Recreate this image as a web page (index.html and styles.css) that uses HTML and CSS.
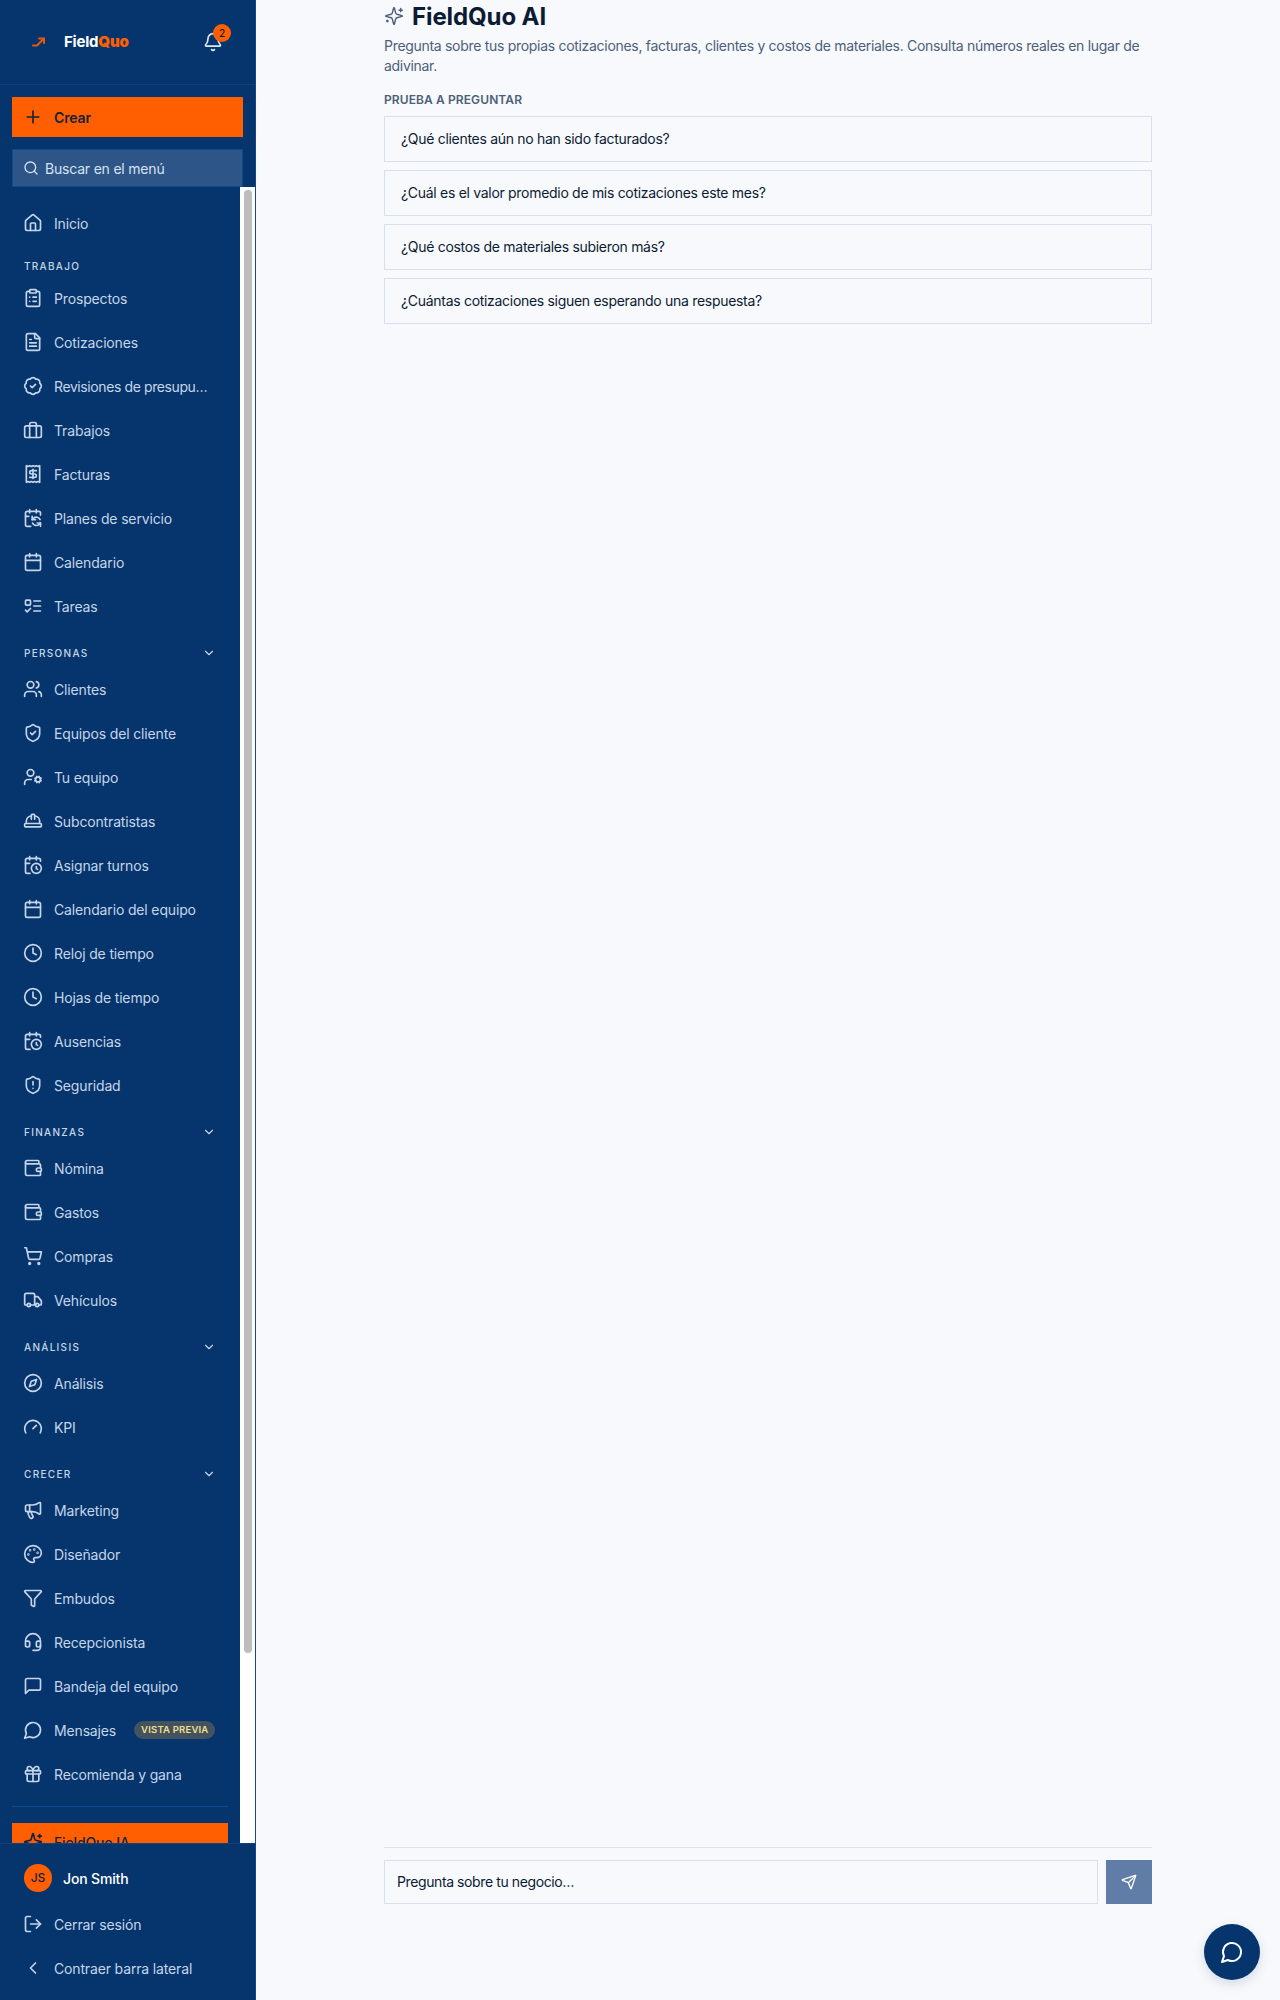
FILE: index.html
```html
<!DOCTYPE html>
<html lang="es">
<head>
	<meta charset="UTF-8">
	<title>FieldQuo AI</title>
	<link rel="stylesheet" href="styles.css">
</head>
<body>
	<svg class="sprite" xmlns="http://www.w3.org/2000/svg">
		<symbol id="i-house" viewBox="0 0 24 24"><path d="M15 21v-8a1 1 0 0 0-1-1h-4a1 1 0 0 0-1 1v8"/><path d="M3 10a2 2 0 0 1 .709-1.528l7-5.999a2 2 0 0 1 2.582 0l7 5.999A2 2 0 0 1 21 10v9a2 2 0 0 1-2 2H5a2 2 0 0 1-2-2z"/></symbol>
		<symbol id="i-clipboard" viewBox="0 0 24 24"><rect x="8" y="2" width="8" height="4" rx="1"/><path d="M16 4h2a2 2 0 0 1 2 2v14a2 2 0 0 1-2 2H6a2 2 0 0 1-2-2V6a2 2 0 0 1 2-2h2"/><path d="M12 11h4"/><path d="M12 16h4"/><path d="M8 11h.01"/><path d="M8 16h.01"/></symbol>
		<symbol id="i-file" viewBox="0 0 24 24"><path d="M15 2H6a2 2 0 0 0-2 2v16a2 2 0 0 0 2 2h12a2 2 0 0 0 2-2V7Z"/><path d="M14 2v4a2 2 0 0 0 2 2h4"/><path d="M10 9H8"/><path d="M16 13H8"/><path d="M16 17H8"/></symbol>
		<symbol id="i-badge" viewBox="0 0 24 24"><path d="M3.85 8.62a4 4 0 0 1 4.78-4.77 4 4 0 0 1 6.74 0 4 4 0 0 1 4.78 4.78 4 4 0 0 1 0 6.74 4 4 0 0 1-4.77 4.78 4 4 0 0 1-6.75 0 4 4 0 0 1-4.78-4.77 4 4 0 0 1 0-6.76Z"/><path d="m9 12 2 2 4-4"/></symbol>
		<symbol id="i-briefcase" viewBox="0 0 24 24"><rect x="2" y="7" width="20" height="14" rx="2"/><path d="M16 21V5a2 2 0 0 0-2-2h-4a2 2 0 0 0-2 2v16"/></symbol>
		<symbol id="i-receipt" viewBox="0 0 24 24"><path d="M4 2v20l2-1 2 1 2-1 2 1 2-1 2 1 2-1 2 1V2l-2 1-2-1-2 1-2-1-2 1-2-1-2 1Z"/><path d="M16 8h-6a2 2 0 1 0 0 4h4a2 2 0 1 1 0 4H8"/><path d="M12 17.5v-11"/></symbol>
		<symbol id="i-calsync" viewBox="0 0 24 24"><path d="M11 10v4h4"/><path d="m11 14 1.535-1.605a5 5 0 0 1 8 1.5"/><path d="M16 2v4"/><path d="m21 18-1.535 1.605a5 5 0 0 1-8-1.5"/><path d="M21 22v-4h-4"/><path d="M21 8.5V6a2 2 0 0 0-2-2H5a2 2 0 0 0-2 2v14a2 2 0 0 0 2 2h4.3"/><path d="M3 10h4"/><path d="M8 2v4"/></symbol>
		<symbol id="i-calendar" viewBox="0 0 24 24"><path d="M8 2v4"/><path d="M16 2v4"/><rect x="3" y="4" width="18" height="18" rx="2"/><path d="M3 10h18"/></symbol>
		<symbol id="i-todo" viewBox="0 0 24 24"><rect x="3" y="5" width="6" height="6" rx="1"/><path d="m3 17 2 2 4-4"/><path d="M13 6h8"/><path d="M13 12h8"/><path d="M13 18h8"/></symbol>
		<symbol id="i-users" viewBox="0 0 24 24"><path d="M16 21v-2a4 4 0 0 0-4-4H6a4 4 0 0 0-4 4v2"/><circle cx="9" cy="7" r="4"/><path d="M22 21v-2a4 4 0 0 0-3-3.87"/><path d="M16 3.13a4 4 0 0 1 0 7.75"/></symbol>
		<symbol id="i-shieldcheck" viewBox="0 0 24 24"><path d="M20 13c0 5-3.5 7.5-7.66 8.95a1 1 0 0 1-.67-.01C7.5 20.5 4 18 4 13V6a1 1 0 0 1 1-1c2 0 4.5-1.2 6.24-2.72a1.17 1.17 0 0 1 1.52 0C14.51 3.81 17 5 19 5a1 1 0 0 1 1 1z"/><path d="m9 12 2 2 4-4"/></symbol>
		<symbol id="i-usercog" viewBox="0 0 24 24"><circle cx="18" cy="15" r="3"/><circle cx="9" cy="7" r="4"/><path d="M10 15H6a4 4 0 0 0-4 4v2"/><path d="m21.7 16.4-.9-.3"/><path d="m15.2 13.9-.9-.3"/><path d="m16.6 18.7.3-.9"/><path d="m19.1 12.2.3-.9"/><path d="m19.6 18.7-.4-1"/><path d="m16.8 12.3-.4-1"/><path d="m14.3 16.6 1-.4"/><path d="m20.7 13.8 1-.4"/></symbol>
		<symbol id="i-hardhat" viewBox="0 0 24 24"><path d="M10 10V5a1 1 0 0 1 1-1h2a1 1 0 0 1 1 1v5"/><path d="M14 6a6 6 0 0 1 6 6v3"/><path d="M4 15v-3a6 6 0 0 1 6-6"/><rect x="2" y="15" width="20" height="4" rx="1"/></symbol>
		<symbol id="i-calclock" viewBox="0 0 24 24"><path d="M16 14v2.2l1.6 1"/><path d="M16 2v4"/><path d="M21 7.5V6a2 2 0 0 0-2-2H5a2 2 0 0 0-2 2v14a2 2 0 0 0 2 2h3.5"/><path d="M3 10h5"/><path d="M8 2v4"/><circle cx="16" cy="16" r="6"/></symbol>
		<symbol id="i-clock" viewBox="0 0 24 24"><circle cx="12" cy="12" r="10"/><polyline points="12 6 12 12 16 14"/></symbol>
		<symbol id="i-shieldalert" viewBox="0 0 24 24"><path d="M20 13c0 5-3.5 7.5-7.66 8.95a1 1 0 0 1-.67-.01C7.5 20.5 4 18 4 13V6a1 1 0 0 1 1-1c2 0 4.5-1.2 6.24-2.72a1.17 1.17 0 0 1 1.52 0C14.51 3.81 17 5 19 5a1 1 0 0 1 1 1z"/><path d="M12 8v4"/><path d="M12 16h.01"/></symbol>
		<symbol id="i-wallet" viewBox="0 0 24 24"><path d="M19 7V4a1 1 0 0 0-1-1H5a2 2 0 0 0 0 4h15a1 1 0 0 1 1 1v4h-3a2 2 0 0 0 0 4h3a1 1 0 0 0 1-1v-2a1 1 0 0 0-1-1"/><path d="M3 5v14a2 2 0 0 0 2 2h15a1 1 0 0 0 1-1v-4"/></symbol>
		<symbol id="i-cart" viewBox="0 0 24 24"><circle cx="8" cy="21" r="1"/><circle cx="19" cy="21" r="1"/><path d="M2.05 2.05h2l2.66 12.42a2 2 0 0 0 2 1.58h9.78a2 2 0 0 0 1.95-1.57l1.65-7.43H5.12"/></symbol>
		<symbol id="i-truck" viewBox="0 0 24 24"><path d="M14 18V6a2 2 0 0 0-2-2H4a2 2 0 0 0-2 2v11a1 1 0 0 0 1 1h2"/><path d="M15 18H9"/><path d="M19 18h2a1 1 0 0 0 1-1v-3.65a1 1 0 0 0-.22-.624l-3.48-4.35A1 1 0 0 0 17.52 8H14"/><circle cx="17" cy="18" r="2"/><circle cx="7" cy="18" r="2"/></symbol>
		<symbol id="i-compass" viewBox="0 0 24 24"><circle cx="12" cy="12" r="10"/><path d="m16.24 7.76-2.12 6.36-6.36 2.12 2.12-6.36 6.36-2.12z"/></symbol>
		<symbol id="i-gauge" viewBox="0 0 24 24"><path d="m12 14 4-4"/><path d="M3.34 19a10 10 0 1 1 17.32 0"/></symbol>
		<symbol id="i-megaphone" viewBox="0 0 24 24"><path d="M11 6a13 13 0 0 0 8.4-2.8A1 1 0 0 1 21 4v12a1 1 0 0 1-1.6.8A13 13 0 0 0 11 14H5a2 2 0 0 1-2-2V8a2 2 0 0 1 2-2z"/><path d="M6 14a12 12 0 0 0 2.4 7.2 2 2 0 0 0 3.2-2.4A8 8 0 0 1 10 14"/><path d="M8 6v8"/></symbol>
		<symbol id="i-palette" viewBox="0 0 24 24"><circle cx="13.5" cy="6.5" r=".5"/><circle cx="17.5" cy="10.5" r=".5"/><circle cx="8.5" cy="7.5" r=".5"/><circle cx="6.5" cy="12.5" r=".5"/><path d="M12 2C6.5 2 2 6.5 2 12s4.5 10 10 10c.926 0 1.648-.746 1.648-1.688 0-.437-.18-.835-.437-1.125-.29-.289-.438-.652-.438-1.125a1.64 1.64 0 0 1 1.668-1.668h1.996c3.051 0 5.555-2.503 5.555-5.554C21.965 6.012 17.461 2 12 2z"/></symbol>
		<symbol id="i-funnel" viewBox="0 0 24 24"><path d="M10 20a1 1 0 0 0 .553.895l2 1A1 1 0 0 0 14 21v-7a2 2 0 0 1 .517-1.341L21.74 4.67A1 1 0 0 0 21 3H3a1 1 0 0 0-.742 1.67l7.225 7.989A2 2 0 0 1 10 14z"/></symbol>
		<symbol id="i-headset" viewBox="0 0 24 24"><path d="M3 11h3a2 2 0 0 1 2 2v3a2 2 0 0 1-2 2H5a2 2 0 0 1-2-2v-5Zm0 0a9 9 0 1 1 18 0m0 0v5a2 2 0 0 1-2 2h-1a2 2 0 0 1-2-2v-3a2 2 0 0 1 2-2h3Z"/><path d="M21 16v2a4 4 0 0 1-4 4h-5"/></symbol>
		<symbol id="i-square" viewBox="0 0 24 24"><path d="M21 15a2 2 0 0 1-2 2H7l-4 4V5a2 2 0 0 1 2-2h14a2 2 0 0 1 2 2z"/></symbol>
		<symbol id="i-circle" viewBox="0 0 24 24"><path d="M7.9 20A9 9 0 1 0 4 16.1L2 22Z"/></symbol>
		<symbol id="i-gift" viewBox="0 0 24 24"><rect x="3" y="8" width="18" height="4" rx="1"/><path d="M12 8v13"/><path d="M19 12v7a2 2 0 0 1-2 2H7a2 2 0 0 1-2-2v-7"/><path d="M7.5 8a2.5 2.5 0 0 1 0-5A4.8 8 0 0 1 12 8a4.8 8 0 0 1 4.5-5 2.5 2.5 0 0 1 0 5"/></symbol>
		<symbol id="i-sparkles" viewBox="0 0 24 24"><path d="M9.937 15.5A2 2 0 0 0 8.5 14.063l-6.135-1.582a.5.5 0 0 1 0-.962L8.5 9.936A2 2 0 0 0 9.937 8.5l1.582-6.135a.5.5 0 0 1 .963 0L14.063 8.5A2 2 0 0 0 15.5 9.937l6.135 1.581a.5.5 0 0 1 0 .964L15.5 14.063a2 2 0 0 0-1.437 1.437l-1.582 6.135a.5.5 0 0 1-.963 0z"/><path d="M20 3v4"/><path d="M22 5h-4"/><path d="M4 17v2"/><path d="M5 18H3"/></symbol>
		<symbol id="i-logout" viewBox="0 0 24 24"><path d="M9 21H5a2 2 0 0 1-2-2V5a2 2 0 0 1 2-2h4"/><polyline points="16 17 21 12 16 7"/><line x1="21" y1="12" x2="9" y2="12"/></symbol>
		<symbol id="i-left" viewBox="0 0 24 24"><path d="m15 18-6-6 6-6"/></symbol>
		<symbol id="i-down" viewBox="0 0 24 24"><path d="m6 9 6 6 6-6"/></symbol>
		<symbol id="i-plus" viewBox="0 0 24 24"><path d="M5 12h14"/><path d="M12 5v14"/></symbol>
		<symbol id="i-search" viewBox="0 0 24 24"><circle cx="11" cy="11" r="8"/><path d="m21 21-4.3-4.3"/></symbol>
		<symbol id="i-bell" viewBox="0 0 24 24"><path d="M10.268 21a2 2 0 0 0 3.464 0"/><path d="M3.262 15.326A1 1 0 0 0 4 17h16a1 1 0 0 0 .74-1.673C19.41 13.956 18 12.499 18 8A6 6 0 0 0 6 8c0 4.499-1.411 5.956-2.738 7.326"/></symbol>
		<symbol id="i-send" viewBox="0 0 24 24"><path d="M14.536 21.686a.5.5 0 0 0 .937-.024l6.5-19a.496.496 0 0 0-.635-.635l-19 6.5a.5.5 0 0 0-.024.937l7.93 3.18a2 2 0 0 1 1.112 1.11z"/><path d="m21.854 2.147-10.94 10.939"/></symbol>
		<symbol id="i-arrow" viewBox="0 0 14 10"><path d="M1 8.500h4L12 1.500"/><path d="M7 1.500h5v4.500"/></symbol>
	</svg>

	<div class="app">
		<aside class="sidebar">
			<div class="brand">
				<div class="logo">
					<svg class="logoMark"><use href="#i-arrow"/></svg>
					<span class="logoText">Field<b>Quo</b></span>
				</div>
				<div class="bell">
					<svg class="icon"><use href="#i-bell"/></svg>
					<span class="bellCount">2</span>
				</div>
			</div>
			<div class="actions">
				<div class="createBtn"><svg class="icon"><use href="#i-plus"/></svg><span>Crear</span></div>
				<div class="menuSearch"><svg class="searchIcon"><use href="#i-search"/></svg><span>Buscar en el menú</span></div>
			</div>
			<div class="menuWrap">
				<nav class="menu">
					<a class="item first"><svg class="icon"><use href="#i-house"/></svg><span>Inicio</span></a>

					<div class="section"><span>TRABAJO</span></div>
					<a class="item"><svg class="icon"><use href="#i-clipboard"/></svg><span>Prospectos</span></a>
					<a class="item"><svg class="icon"><use href="#i-file"/></svg><span>Cotizaciones</span></a>
					<a class="item"><svg class="icon"><use href="#i-badge"/></svg><span class="clip">Revisiones de presupuestos</span></a>
					<a class="item"><svg class="icon"><use href="#i-briefcase"/></svg><span>Trabajos</span></a>
					<a class="item"><svg class="icon"><use href="#i-receipt"/></svg><span>Facturas</span></a>
					<a class="item"><svg class="icon"><use href="#i-calsync"/></svg><span>Planes de servicio</span></a>
					<a class="item"><svg class="icon"><use href="#i-calendar"/></svg><span>Calendario</span></a>
					<a class="item"><svg class="icon"><use href="#i-todo"/></svg><span>Tareas</span></a>

					<div class="section toggle"><span>PERSONAS</span><svg class="chev"><use href="#i-down"/></svg></div>
					<a class="item"><svg class="icon"><use href="#i-users"/></svg><span>Clientes</span></a>
					<a class="item"><svg class="icon"><use href="#i-shieldcheck"/></svg><span>Equipos del cliente</span></a>
					<a class="item"><svg class="icon"><use href="#i-usercog"/></svg><span>Tu equipo</span></a>
					<a class="item"><svg class="icon"><use href="#i-hardhat"/></svg><span>Subcontratistas</span></a>
					<a class="item"><svg class="icon"><use href="#i-calclock"/></svg><span>Asignar turnos</span></a>
					<a class="item"><svg class="icon"><use href="#i-calendar"/></svg><span>Calendario del equipo</span></a>
					<a class="item"><svg class="icon"><use href="#i-clock"/></svg><span>Reloj de tiempo</span></a>
					<a class="item"><svg class="icon"><use href="#i-clock"/></svg><span>Hojas de tiempo</span></a>
					<a class="item"><svg class="icon"><use href="#i-calclock"/></svg><span>Ausencias</span></a>
					<a class="item"><svg class="icon"><use href="#i-shieldalert"/></svg><span>Seguridad</span></a>

					<div class="section toggle"><span>FINANZAS</span><svg class="chev"><use href="#i-down"/></svg></div>
					<a class="item"><svg class="icon"><use href="#i-wallet"/></svg><span>Nómina</span></a>
					<a class="item"><svg class="icon"><use href="#i-wallet"/></svg><span>Gastos</span></a>
					<a class="item"><svg class="icon"><use href="#i-cart"/></svg><span>Compras</span></a>
					<a class="item"><svg class="icon"><use href="#i-truck"/></svg><span>Vehículos</span></a>

					<div class="section toggle"><span>ANÁLISIS</span><svg class="chev"><use href="#i-down"/></svg></div>
					<a class="item"><svg class="icon"><use href="#i-compass"/></svg><span>Análisis</span></a>
					<a class="item"><svg class="icon"><use href="#i-gauge"/></svg><span>KPI</span></a>

					<div class="section toggle"><span>CRECER</span><svg class="chev"><use href="#i-down"/></svg></div>
					<a class="item"><svg class="icon"><use href="#i-megaphone"/></svg><span>Marketing</span></a>
					<a class="item"><svg class="icon"><use href="#i-palette"/></svg><span>Diseñador</span></a>
					<a class="item"><svg class="icon"><use href="#i-funnel"/></svg><span>Embudos</span></a>
					<a class="item"><svg class="icon"><use href="#i-headset"/></svg><span>Recepcionista</span></a>
					<a class="item"><svg class="icon"><use href="#i-square"/></svg><span>Bandeja del equipo</span></a>
					<a class="item"><svg class="icon"><use href="#i-circle"/></svg><span>Mensajes</span><em class="preview">VISTA PREVIA</em></a>
					<a class="item"><svg class="icon"><use href="#i-gift"/></svg><span>Recomienda y gana</span></a>

					<div class="menuDivider"></div>
					<a class="item aiItem"><svg class="icon"><use href="#i-sparkles"/></svg><span>FieldQuo IA</span></a>
				</nav>
				<div class="scrollTrack"><div class="scrollThumb"></div></div>
			</div>
			<div class="foot">
				<div class="user"><span class="avatar">JS</span><span class="userName">Jon Smith</span></div>
				<a class="item"><svg class="icon"><use href="#i-logout"/></svg><span>Cerrar sesión</span></a>
				<a class="item"><svg class="icon"><use href="#i-left"/></svg><span>Contraer barra lateral</span></a>
			</div>
		</aside>

		<main class="main">
			<div class="chat">
				<div class="intro">
					<h1 class="title"><svg class="titleIcon"><use href="#i-sparkles"/></svg>FieldQuo AI</h1>
					<p class="lead">Pregunta sobre tus propias cotizaciones, facturas, clientes y costos de materiales. Consulta números reales en lugar de adivinar.</p>
					<div class="tryLabel">PRUEBA A PREGUNTAR</div>
					<ul class="prompts">
						<li>¿Qué clientes aún no han sido facturados?</li>
						<li>¿Cuál es el valor promedio de mis cotizaciones este mes?</li>
						<li>¿Qué costos de materiales subieron más?</li>
						<li>¿Cuántas cotizaciones siguen esperando una respuesta?</li>
					</ul>
				</div>
				<div class="composer">
					<div class="askInput">Pregunta sobre tu negocio…</div>
					<div class="sendBtn"><svg class="sendIcon"><use href="#i-send"/></svg></div>
				</div>
			</div>
		</main>
	</div>

	<div class="chatBubble"><svg class="bubbleIcon"><use href="#i-circle"/></svg></div>
</body>
</html>
```

FILE: styles.css
```css
*{
	margin: 0;
	padding: 0;
	box-sizing: border-box;
}
ul{
	list-style: none;
}
body{
	background-color: #f8f9fc;
	font-family: "Inter", "Liberation Sans", sans-serif;
	color: #0b1b33;
}
.sprite{
	display: none;
}
svg{
	fill: none;
	stroke: currentColor;
	stroke-width: 2;
	stroke-linecap: round;
	stroke-linejoin: round;
	flex-shrink: 0;
}
.app{
	display: flex;
	height: 2000px;
}

/* sidebar */
.sidebar{
	display: flex;
	flex-direction: column;
	width: 256px;
	height: 2000px;
	background-color: #05356c;
	border-right: 1px solid #0f4a8f;
	color: #c6d5e9;
	letter-spacing: -0.15px;
	flex-shrink: 0;
}
.icon{
	width: 20px;
	height: 20px;
}
.brand{
	display: flex;
	align-items: center;
	justify-content: space-between;
	height: 85px;
	padding: 0 32px 1px 32px;
	border-bottom: 1px solid #0f437f;
}
.logo{
	display: flex;
	align-items: center;
	gap: 18px;
}
.logoMark{
	width: 14px;
	height: 10px;
	color: #e8590c;
}
.logoText{
	font-size: 15px;
	font-weight: 700;
	letter-spacing: -0.2px;
	color: #fff;
}
.logoText b{
	color: #ff5f00;
}
.bell{
	position: relative;
	width: 20px;
	height: 20px;
	color: #dfe7f2;
}
.bellCount{
	position: absolute;
	top: -8px;
	right: -8px;
	width: 18px;
	height: 18px;
	border-radius: 50%;
	background-color: #ff5f00;
	color: #0b1b33;
	font-size: 10px;
	font-weight: 500;
	line-height: 18px;
	text-align: center;
}
.actions{
	display: flex;
	flex-direction: column;
	gap: 12px;
	padding: 12px 12px 0;
}
.createBtn{
	display: flex;
	align-items: center;
	gap: 11px;
	height: 40px;
	padding: 0 11px;
	background-color: #ff5f00;
	color: #14233a;
	font-size: 14px;
	font-weight: 600;
}
.menuSearch{
	display: flex;
	align-items: center;
	gap: 6px;
	height: 38px;
	padding: 0 10px;
	background-color: #2d5587;
	border: 1px solid #0f4a8f;
	color: #d8e2f0;
	font-size: 14px;
	letter-spacing: -0.2px;
}
.searchIcon{
	width: 16px;
	height: 16px;
}
.menuWrap{
	display: flex;
	flex: 1;
	min-height: 0;
}
.menu{
	width: 240px;
	overflow: hidden;
	padding: 0 12px;
}
.scrollTrack{
	width: 15px;
	padding: 3px 3px 0 4px;
	background-color: #fff;
}
.scrollThumb{
	height: 1463px;
	border-radius: 4px;
	background-color: #bdbdbd;
}
.item{
	display: flex;
	align-items: center;
	gap: 11px;
	height: 44px;
	padding-left: 11px;
	font-size: 14px;
	white-space: nowrap;
}
.item.first{
	margin-top: 14px;
}
.clip{
	max-width: 157px;
	overflow: hidden;
	letter-spacing: -0.4px;
	text-overflow: ellipsis;
}
.section{
	display: flex;
	align-items: center;
	justify-content: space-between;
	height: 20px;
	margin-top: 11px;
	padding: 0 12px;
	font-size: 10px;
	font-weight: 500;
	letter-spacing: 1.3px;
}
.section.toggle{
	height: 28px;
}
.chev{
	width: 14px;
	height: 14px;
}
.preview{
	margin-left: 7px;
	padding: 0 7px;
	height: 18px;
	border-radius: 9px;
	background-color: #43525f;
	color: #f3e08a;
	font-size: 9.500px;
	font-style: normal;
	font-weight: 600;
	line-height: 18px;
	letter-spacing: 0.2px;
}
.menuDivider{
	height: 1px;
	margin: 10px 0 16px;
	background-color: #0f4a8f;
}
.item.aiItem{
	height: 38px;
	background-color: #ff5f00;
	color: #14233a;
	font-weight: 500;
}
.foot{
	height: 157px;
	border-top: 1px solid #0f437f;
}
.foot .item{
	padding-left: 23px;
}
.user{
	display: flex;
	align-items: center;
	gap: 11px;
	height: 44px;
	padding: 0 24px;
	margin: 12px 0 2px;
}
.avatar{
	width: 28px;
	height: 28px;
	border-radius: 50%;
	background-color: #ff5f00;
	color: #14233a;
	font-size: 12px;
	font-weight: 500;
	line-height: 28px;
	text-align: center;
}
.userName{
	color: #fff;
	font-size: 14px;
	font-weight: 500;
}

/* main */
.main{
	flex: 1;
	min-width: 0;
}
.chat{
	display: flex;
	flex-direction: column;
	justify-content: space-between;
	width: 768px;
	height: 1904px;
	margin-left: 128px;
}
.title{
	display: flex;
	align-items: center;
	gap: 8px;
	height: 32px;
	font-size: 24px;
	font-weight: 700;
	letter-spacing: -0.1px;
}
.titleIcon{
	width: 20px;
	height: 20px;
	color: #4c6079;
	stroke-width: 1.7;
}
.lead{
	margin-top: 4px;
	font-size: 14px;
	line-height: 20px;
	letter-spacing: -0.3px;
	color: #4c6079;
}
.tryLabel{
	margin-top: 16px;
	font-size: 12px;
	font-weight: 600;
	line-height: 16px;
	letter-spacing: 0.1px;
	color: #4c6079;
}
.prompts{
	display: flex;
	flex-direction: column;
	gap: 8px;
	margin-top: 8px;
}
.prompts li{
	height: 46px;
	padding: 0 16px;
	border: 1px solid #d6e0ef;
	font-size: 14px;
	line-height: 44px;
	letter-spacing: -0.3px;
}
.composer{
	display: flex;
	gap: 8px;
	padding-top: 12px;
	border-top: 1px solid #dde4ee;
}
.askInput{
	flex: 1;
	height: 44px;
	padding: 0 12px;
	border: 1px solid #d6e0ef;
	font-size: 14px;
	line-height: 42px;
	letter-spacing: -0.4px;
}
.sendBtn{
	display: flex;
	align-items: center;
	justify-content: center;
	width: 46px;
	height: 44px;
	background-color: #5f7da6;
	color: #fff;
}
.sendIcon{
	width: 16px;
	height: 16px;
}
.chatBubble{
	position: fixed;
	left: 1204px;
	top: 1924px;
	display: flex;
	align-items: center;
	justify-content: center;
	width: 56px;
	height: 56px;
	border-radius: 50%;
	background-color: #05356c;
	color: #fff;
	box-shadow: 0 4px 12px rgba(5, 53, 108, 0.15);
}
.bubbleIcon{
	width: 24px;
	height: 24px;
}
```
